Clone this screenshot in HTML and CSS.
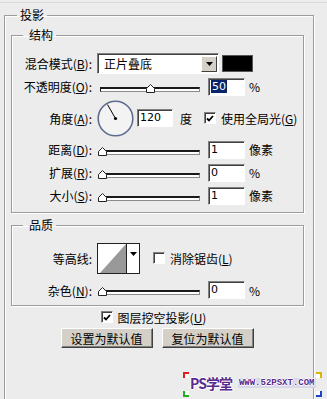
FILE: index.html
```html
<!DOCTYPE html>
<html lang="zh-CN">
<head>
    <meta charset="UTF-8">
    <title>投影</title>
    <link rel="stylesheet" href="styles.css">
</head>
<body>
    <div class="dialog">
        <fieldset class="group outer">
            <legend>投影</legend>

            <!-- 结构 -->
            <fieldset class="group inner">
                <legend>结构</legend>
                <div class="rows rows-struct">
                    <div class="row">
                        <span class="lbl">混合模式(<u>B</u>):</span>
                        <div class="select">
                            <span class="sel-text">正片叠底</span>
                            <span class="sel-btn"><svg width="7" height="4" viewBox="0 0 7 4"><path d="M0 0h7L3.5 4z" fill="#000"/></svg></span>
                        </div>
                        <span class="swatch"></span>
                    </div>
                    <div class="row">
                        <span class="lbl">不透明度(<u>O</u>):</span>
                        <div class="slider"><span class="track"></span><span class="thumb" style="left:50%"><svg width="9" height="9" viewBox="0 0 9 9"><path d="M0.5 8.5V4.5L4.5 0.5L8.5 4.5V8.5Z" fill="#fff" stroke="#222"/></svg></span></div>
                        <span class="field"><span class="hl">50</span></span>
                        <span class="unit">%</span>
                    </div>
                    <div class="row row-angle">
                        <span class="lbl">角度(<u>A</u>):</span>
                        <svg class="dial" width="37" height="37" viewBox="0 0 37 37">
                            <circle cx="18.5" cy="18.5" r="17.3" fill="#f3f3f3" stroke="#5e6c8e" stroke-width="1.6"/>
                            <line x1="18.5" y1="18.5" x2="10.5" y2="4.6" stroke="#000" stroke-width="1"/>
                            <circle cx="18.5" cy="18.5" r="1.6" fill="#000"/>
                        </svg>
                        <span class="field field-angle">120</span>
                        <span class="unit unit-deg">度</span>
                        <span class="check on"><svg width="8" height="7" viewBox="0 0 8 7"><path d="M1 3.5L3 5.5L7 1" fill="none" stroke="#000" stroke-width="1.8"/></svg></span>
                        <span class="check-text">使用全局光(<u>G</u>)</span>
                    </div>
                    <div class="row">
                        <span class="lbl">距离(<u>D</u>):</span>
                        <div class="slider"><span class="track"></span><span class="thumb" style="left:2%"><svg width="9" height="9" viewBox="0 0 9 9"><path d="M0.5 8.5V4.5L4.5 0.5L8.5 4.5V8.5Z" fill="#fff" stroke="#222"/></svg></span></div>
                        <span class="field">1</span>
                        <span class="unit">像素</span>
                    </div>
                    <div class="row">
                        <span class="lbl">扩展(<u>R</u>):</span>
                        <div class="slider"><span class="track"></span><span class="thumb" style="left:2%"><svg width="9" height="9" viewBox="0 0 9 9"><path d="M0.5 8.5V4.5L4.5 0.5L8.5 4.5V8.5Z" fill="#fff" stroke="#222"/></svg></span></div>
                        <span class="field">0</span>
                        <span class="unit">%</span>
                    </div>
                    <div class="row">
                        <span class="lbl">大小(<u>S</u>):</span>
                        <div class="slider"><span class="track"></span><span class="thumb" style="left:2%"><svg width="9" height="9" viewBox="0 0 9 9"><path d="M0.5 8.5V4.5L4.5 0.5L8.5 4.5V8.5Z" fill="#fff" stroke="#222"/></svg></span></div>
                        <span class="field">1</span>
                        <span class="unit">像素</span>
                    </div>
                </div>
            </fieldset>

            <!-- 品质 -->
            <fieldset class="group inner quality">
                <legend>品质</legend>
                <div class="rows rows-quality">
                    <div class="row row-contour">
                        <span class="lbl">等高线:</span>
                        <div class="contour">
                            <svg class="contour-preview" width="28" height="29" viewBox="0 0 28 29"><rect width="28" height="29" fill="#fff"/><path d="M2 29L28 0V29Z" fill="#999"/></svg>
                            <span class="contour-btn"><svg width="7" height="4" viewBox="0 0 7 4"><path d="M0 0h7L3.5 4z" fill="#000"/></svg></span>
                        </div>
                        <span class="check check-aa"></span>
                        <span class="check-text">消除锯齿(<u>L</u>)</span>
                    </div>
                    <div class="row row-noise">
                        <span class="lbl">杂色(<u>N</u>):</span>
                        <div class="slider"><span class="track"></span><span class="thumb" style="left:2%"><svg width="9" height="9" viewBox="0 0 9 9"><path d="M0.5 8.5V4.5L4.5 0.5L8.5 4.5V8.5Z" fill="#fff" stroke="#222"/></svg></span></div>
                        <span class="field">0</span>
                        <span class="unit">%</span>
                    </div>
                </div>
            </fieldset>

            <div class="knockout">
                <span class="check on"><svg width="8" height="7" viewBox="0 0 8 7"><path d="M1 3.5L3 5.5L7 1" fill="none" stroke="#000" stroke-width="1.8"/></svg></span>
                <span class="check-text">图层挖空投影(<u>U</u>)</span>
            </div>
            <div class="buttons">
                <button type="button">设置为默认值</button>
                <button type="button">复位为默认值</button>
            </div>
        </fieldset>

        <!-- 水印 -->
        <div class="watermark">
            <span class="mark mark-tl"></span>
            <span class="mark mark-bl"></span>
            <span class="mark mark-tr"></span>
            <span class="mark mark-br"></span>
            <span class="wm-name">PS学堂</span>
            <span class="wm-url">WWW.52PSXT.COM</span>
        </div>
    </div>
</body>
</html>
```

FILE: styles.css
```css
/* 页面 */
html, body {
    margin: 0;
    height: 399px;
    overflow: hidden;
    background: #ececec;
}

body {
    font-family: "Noto Sans CJK SC", "Noto Sans", sans-serif;
    font-size: 12px;
    color: #000;
}

u {
    text-decoration: underline;
}

.dialog {
    position: relative;
    height: 396px;
    overflow: hidden;
    border-top: 1px solid #dadada;
    margin-top: 2px;
}

/* 分组框 */
.group {
    margin: 0;
    min-width: 0;
    border: 1px solid #9c9c9c;
    box-shadow: inset 1px 1px 0 #fff, 1px 1px 0 #fff;
}

.group legend {
    line-height: 14px;
    padding: 0 3px;
}

.outer {
    margin: 5px 0 0 4px;
    width: 310px;
    height: 395px;
    box-sizing: border-box;
    padding: 0 9px 0 6px;
}

.outer > legend {
    margin-left: 6px;
}

.inner {
    margin-top: 6px;
    padding: 0;
}

.inner > legend {
    margin-left: 11px;
    padding: 0 3px 0 6px;
}

.quality {
    margin-top: 5px;
}

.rows-struct {
    padding: 10px 0 5px;
}

.rows-quality {
    padding: 9px 0 4px;
}

/* 行 */
.row {
    display: flex;
    align-items: center;
    height: 23px;
}

.row-angle {
    height: 40px;
}

.row-contour {
    height: 34px;
    margin-bottom: 4px;
}

.row-noise {
    height: 22px;
}

.lbl {
    width: 80px;
    text-align: right;
    white-space: nowrap;
    flex: none;
}

/* 下拉框 */
.select {
    margin-left: 5px;
    width: 122px;
    height: 21px;
    box-sizing: border-box;
    border: 1px solid;
    border-color: #808080 #fff #fff #808080;
    box-shadow: inset 1px 1px 0 #404040;
    background: #fff;
    display: flex;
    align-items: center;
    padding: 1px 1px 1px 2px;
}

.sel-text {
    flex: 1;
    padding-left: 4px;
}

.sel-btn {
    width: 16px;
    height: 16px;
    box-sizing: border-box;
    background: #d4d0c8;
    border: 1px solid;
    border-color: #fff #404040 #404040 #fff;
    display: flex;
    align-items: center;
    justify-content: center;
}

.swatch {
    margin-left: 3px;
    width: 31px;
    height: 17px;
    box-sizing: border-box;
    background: #000;
    border: 1px solid #555;
}

/* 滑块 */
.slider {
    position: relative;
    margin-left: 8px;
    width: 100px;
    height: 9px;
    margin-top: 3px;
    flex: none;
}

.track {
    position: absolute;
    left: 0;
    right: 0;
    top: 3px;
    height: 5px;
    box-sizing: border-box;
    border: 1px solid;
    border-top-width: 2px;
    border-color: #1a1a1a #8a8a8a #8a8a8a #1a1a1a;
    background: #fff;
}

.thumb {
    position: absolute;
    top: 0;
    width: 9px;
    height: 9px;
    margin-left: -4px;
    line-height: 0;
}

/* 输入框 */
.field {
    margin-left: 8px;
    width: 37px;
    height: 18px;
    box-sizing: border-box;
    border: 1px solid;
    border-color: #808080 #fff #fff #808080;
    box-shadow: inset 1px 1px 0 #404040;
    background: #fff;
    padding-left: 2px;
    line-height: 16px;
    font-family: "DejaVu Sans", sans-serif;
    font-size: 11px;
    flex: none;
}

.hl {
    background: #0a246a;
    color: #fff;
    padding: 0 1px;
}

.unit {
    margin-left: 4px;
}

.dial {
    margin-left: 5px;
    flex: none;
}

.field-angle {
    margin-left: 3px;
    width: 36px;
}

.unit-deg {
    margin-left: 7px;
}

/* 复选框 */
.check {
    width: 12px;
    height: 12px;
    box-sizing: border-box;
    border: 1px solid;
    border-color: #808080 #fff #fff #808080;
    box-shadow: inset 1px 1px 0 #404040;
    background: #fff;
    display: flex;
    align-items: center;
    justify-content: center;
    flex: none;
}

.row-angle .check {
    margin-left: 12px;
}

.check-text {
    margin-left: 5px;
    white-space: nowrap;
}

/* 等高线 */
.contour {
    margin-left: 5px;
    width: 43px;
    height: 31px;
    box-sizing: border-box;
    border: 1px solid #222;
    background: #fff;
    display: flex;
}

.contour-preview {
    display: block;
}

.contour-btn {
    flex: 1;
    border-left: 1px solid #222;
    display: flex;
    justify-content: center;
    padding-top: 8px;
}

.check-aa {
    margin-left: 13px;
}

/* 底部 */
.knockout {
    display: flex;
    align-items: center;
    justify-content: center;
    height: 14px;
    margin-top: 4px;
    padding-right: 8px;
}

.buttons {
    display: flex;
    justify-content: center;
    gap: 9px;
    margin-top: 4px;
    padding-right: 1px;
}

.buttons button {
    width: 92px;
    height: 20px;
    padding: 0;
    font-family: "Noto Sans CJK SC", sans-serif;
    font-size: 12px;
    color: #000;
    background: #d4d0c8;
    border: 1px solid;
    border-color: #fff #404040 #404040 #fff;
    box-shadow: inset -1px -1px 0 #808080;
}

/* 水印 */
.watermark {
    position: absolute;
    left: 183px;
    top: 369px;
    width: 139px;
    height: 22px;
    display: flex;
    align-items: center;
    padding-left: 7px;
    box-sizing: border-box;
    gap: 6px;
}

.wm-name {
    font-family: "Noto Sans CJK SC", sans-serif;
    font-weight: bold;
    font-size: 14px;
    color: #5a2a8c;
    text-shadow: 1px 0 #fff, -1px 0 #fff, 0 1px #fff, 0 -1px #fff;
    letter-spacing: -1px;
}

.wm-url {
    font-family: "Liberation Mono", monospace;
    font-weight: bold;
    font-size: 9px;
    color: #5a2a8c;
    text-shadow: 1px 0 #fff, -1px 0 #fff, 0 1px #fff, 0 -1px #fff;
    background: #d8d8e8;
    padding: 0 1px;
}

.mark {
    position: absolute;
    width: 6px;
    height: 6px;
    background: #fff;
    box-sizing: border-box;
}

.mark-tl { left: 0; top: 0; border-top: 2px solid #e02020; border-left: 2px solid #e02020; }
.mark-bl { left: 0; bottom: -3px; border-bottom: 2px solid #20b020; border-left: 2px solid #20b020; }
.mark-tr { right: 0; top: 0; border-top: 2px solid #d8b800; border-right: 2px solid #d8b800; }
.mark-br { right: 0; bottom: -3px; border-bottom: 2px solid #2040d0; border-right: 2px solid #2040d0; }
```
